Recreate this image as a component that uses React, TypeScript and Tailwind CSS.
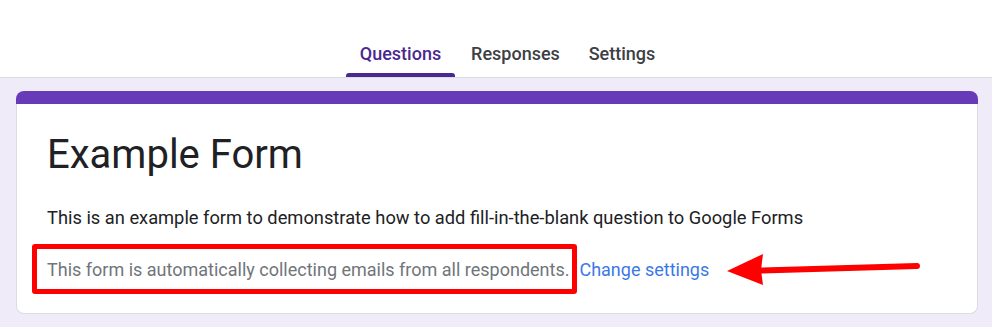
const tabs = [
  { label: "Questions", width: "w-[109px]", active: true },
  { label: "Responses", width: "w-[111px]", active: false },
  { label: "Settings", width: "w-[92px]", active: false },
];

function Header() {
  return (
    <div className="flex h-[78px] items-end justify-center border-b border-[#dadce0] bg-white pl-[22px]">
      <nav className="flex gap-[5px]">
        {tabs.map((t) => (
          <div key={t.label} className={`flex flex-col items-center ${t.width}`}>
            <span
              className={`pb-[9px] text-[18px] leading-5 font-medium ${
                t.active ? "text-[#4a2890]" : "text-[#3c4043]"
              }`}
            >
              {t.label}
            </span>
            <span
              className={`h-[4px] w-full rounded-t-[3px] ${
                t.active ? "bg-[#4a2890]" : "bg-transparent"
              }`}
            />
          </div>
        ))}
      </nav>
    </div>
  );
}

function Arrow() {
  return (
    <svg
      className="absolute left-[704px] top-[159px]"
      width="205"
      height="40"
      viewBox="0 0 205 40"
    >
      <line x1="40" y1="20.5" x2="197" y2="16" stroke="#ff0000" strokeWidth="6" strokeLinecap="round" />
      <polygon points="7,21 43,4 41,20 43,35" fill="#ff0000" />
    </svg>
  );
}

export default function App() {
  return (
    <div
      className="min-h-[327px] bg-[#f0ebf8]"
      style={{ fontFamily: "Roboto, 'Liberation Sans', sans-serif" }}
    >
      <Header />
      <div className="relative ml-4 mt-[13px] w-[962px]">
        <div className="h-[13px] rounded-t-lg bg-[#673ab7]" />
        <div className="rounded-b-lg border-x border-b border-[#dadce0] bg-white pb-[19px] pl-[30px] pt-[25px]">
          <h1 className="text-[40px] leading-[52px] font-normal text-[#202124]">
            Example Form
          </h1>
          <p className="mt-[25px] text-[18.3px] leading-6 text-[#202124]">
            This is an example form to demonstrate how to add fill-in-the-blank question to Google Forms
          </p>
          <div className="mt-[14px] flex items-start">
            <div className="-ml-[15px] rounded-[3px] border-[5px] border-[#ff0000] pb-[6px] pl-[10px] pr-[3px] pt-[9px]">
              <span className="text-[18px] leading-6 text-[#70757a]">
                This form is automatically collecting emails from all respondents.
              </span>
            </div>
            <span className="ml-[2px] mt-[14px] text-[18px] leading-6 text-[#3b78e7]">
              Change settings
            </span>
          </div>
        </div>
        <Arrow />
      </div>
    </div>
  );
}
